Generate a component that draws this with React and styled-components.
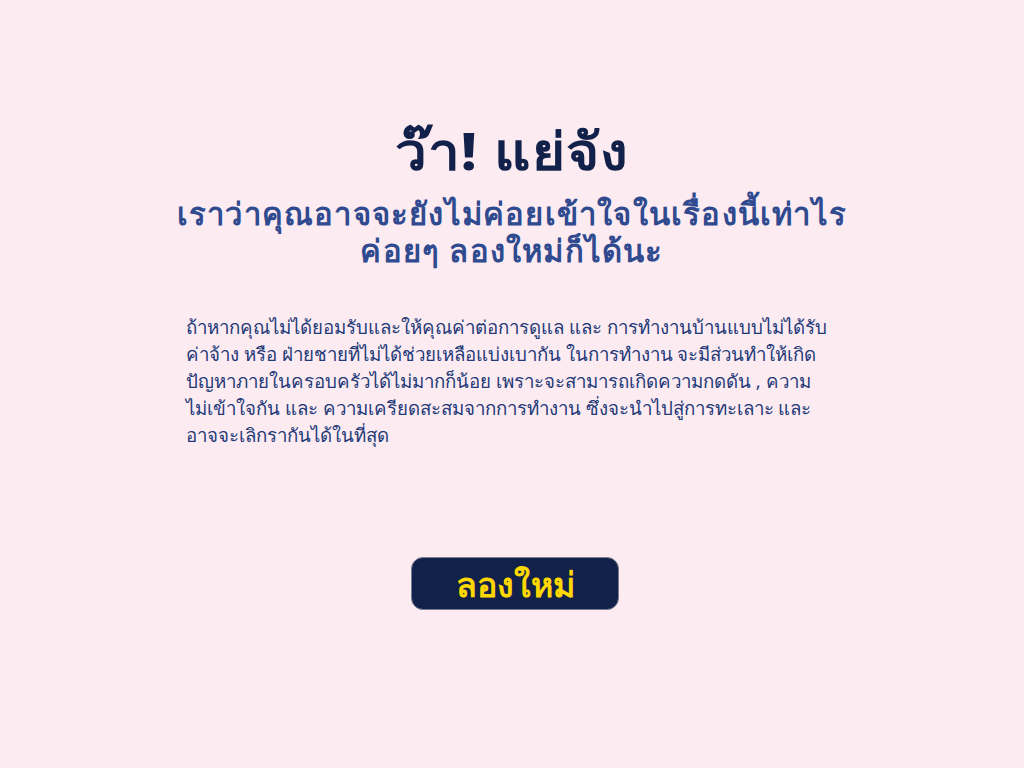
import React from "react";
import styled, { createGlobalStyle } from "styled-components";

const Global = createGlobalStyle`
  html, body { margin: 0; padding: 0; }
  body { background: #fdebf2; font-family: "Noto Sans", "DejaVu Sans", sans-serif; }
`;

const Page = styled.main`
  min-height: 768px;
  display: flex;
  flex-direction: column;
  align-items: center;
  padding-top: 116px;
  box-sizing: border-box;
`;

const Title = styled.h1`
  margin: 0;
  font-size: 52px;
  line-height: 68px;
  font-weight: 800;
  letter-spacing: 1px;
  color: #12214a;
  text-align: center;
  transform: scaleX(1.09);
`;

const Subtitle = styled.h2`
  margin: 11px 0 0;
  width: 820px;
  font-size: 31px;
  line-height: 37px;
  font-weight: 700;
  color: #2f4a8f;
  text-align: center;
  letter-spacing: 1.2px;
`;

const Body = styled.p`
  margin: 44px 0 0;
  width: 652px;
  font-size: 18.7px;
  line-height: 27px;
  color: #233a78;
  white-space: nowrap;
`;

const Button = styled.button`
  margin: 109px 0 0 6px;
  width: 208px;
  height: 53px;
  border-radius: 12px;
  border: 1px solid #7a7d92;
  background: #12214a;
  color: #ffd800;
  font-family: inherit;
  font-size: 34px;
  line-height: 1;
  font-weight: 800;
  cursor: pointer;
  padding: 0;
`;

const lines = [
  "ถ้าหากคุณไม่ได้ยอมรับและให้คุณค่าต่อการดูแล และ การทำงานบ้านแบบไม่ได้รับ",
  "ค่าจ้าง หรือ ฝ่ายชายที่ไม่ได้ช่วยเหลือแบ่งเบากัน ในการทำงาน จะมีส่วนทำให้เกิด",
  "ปัญหาภายในครอบครัวได้ไม่มากก็น้อย เพราะจะสามารถเกิดความกดดัน , ความ",
  "ไม่เข้าใจกัน และ ความเครียดสะสมจากการทำงาน ซึ่งจะนำไปสู่การทะเลาะ และ",
  "อาจจะเลิกรากันได้ในที่สุด",
];

export default function App() {
  return (
    <>
      <Global />
      <Page>
        <Title>ว๊า! แย่จัง</Title>
        <Subtitle>
          เราว่าคุณอาจจะยังไม่ค่อยเข้าใจในเรื่องนี้เท่าไร
          <br />
          ค่อยๆ ลองใหม่ก็ได้นะ
        </Subtitle>
        <Body>
          {lines.map((l, i) => (
            <React.Fragment key={i}>
              {l}
              {i < lines.length - 1 && <br />}
            </React.Fragment>
          ))}
        </Body>
        <Button>ลองใหม่</Button>
      </Page>
    </>
  );
}
